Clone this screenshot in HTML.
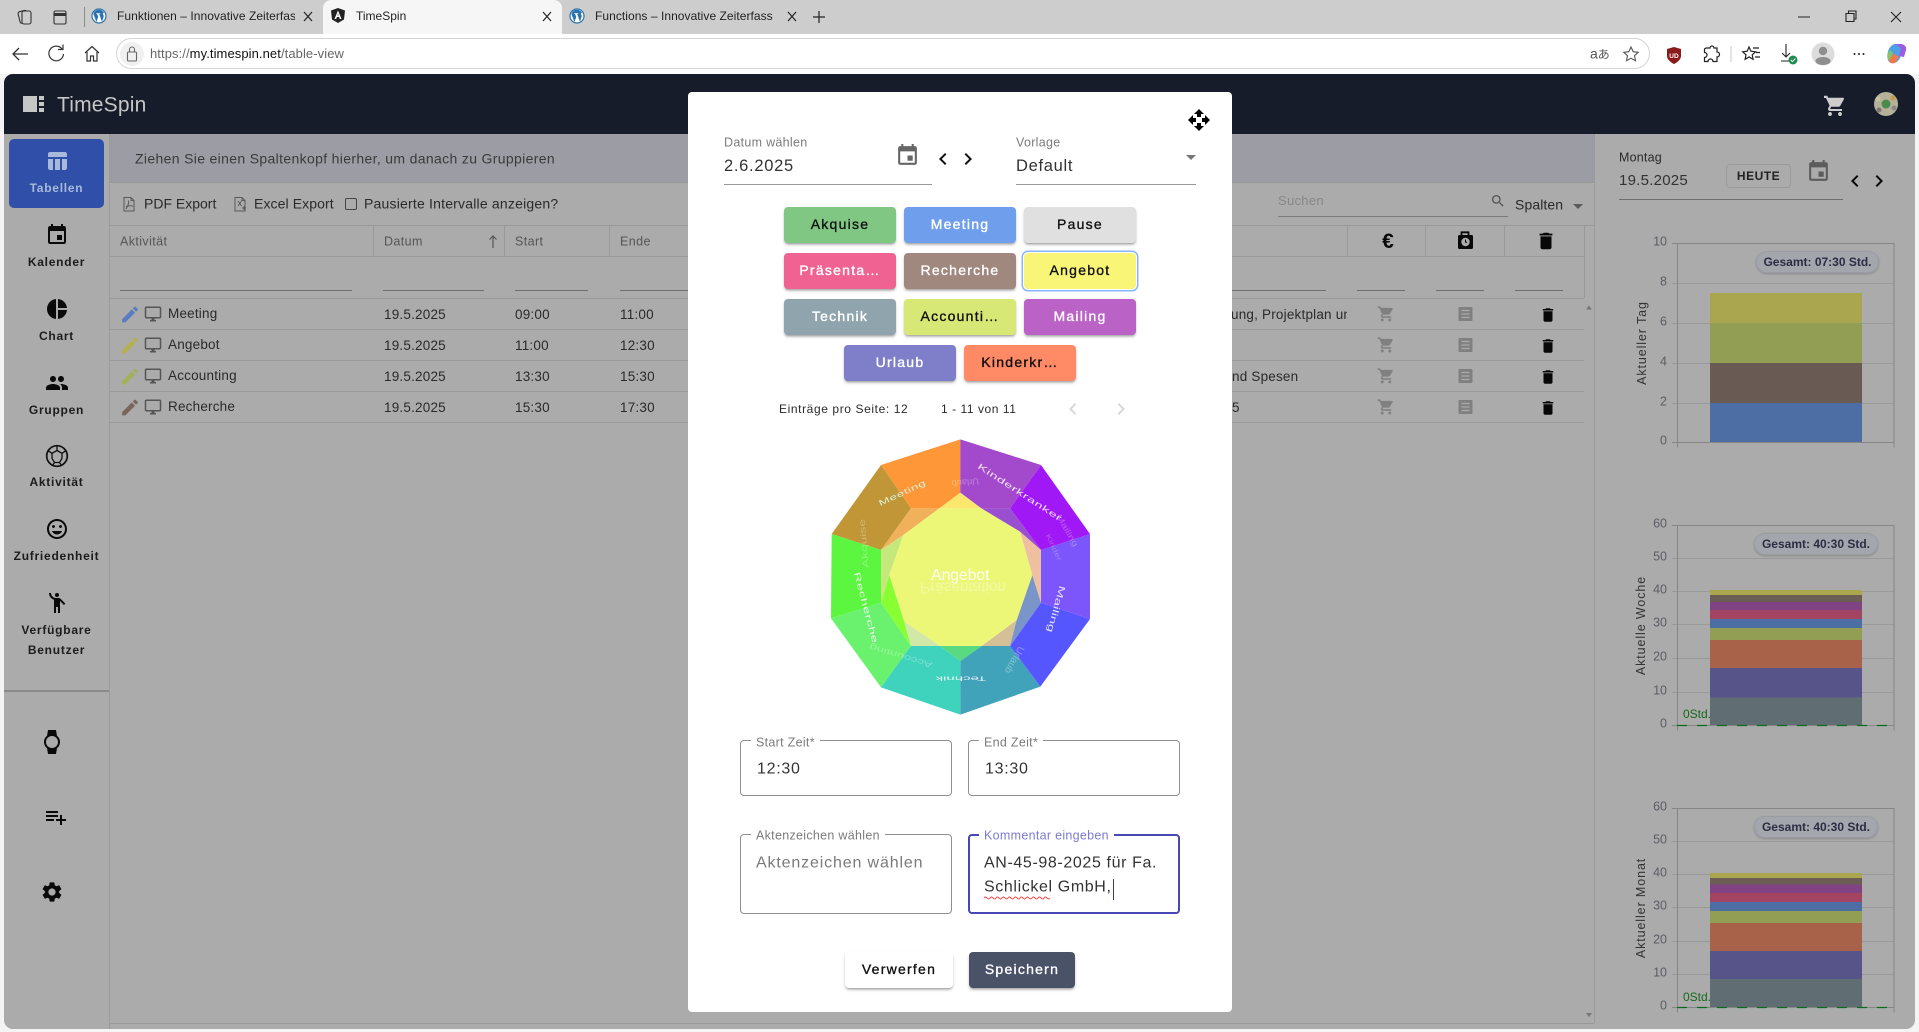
<!DOCTYPE html>
<html lang="de"><head><meta charset="utf-8"><title>TimeSpin</title>
<style>
html,body{margin:0;padding:0;width:1919px;height:1032px;overflow:hidden;background:#f4f4f4;font-family:"Liberation Sans",sans-serif}
.a{position:absolute}
.t{position:absolute;white-space:nowrap;transform:translateY(-50%);line-height:1.2}
svg.full{position:absolute;left:0;top:0;width:1919px;height:1032px;pointer-events:none}
.side{font-size:12px;font-weight:700;letter-spacing:.75px;color:#1c1c1c;width:105px;left:4px;text-align:center}
.row{font-size:13.5px;color:#2a2a2a;letter-spacing:.2px}
.hd{font-size:12.5px;color:#555;letter-spacing:.4px}
.ul{position:absolute;height:1px;background:#6e6e6e}
.hl{position:absolute;height:1px;background:#999}
.vl{position:absolute;width:1px;background:#999}
.num{font-size:12.5px;color:#5c5c66;text-align:right;width:30px;left:1637px}
.pill{position:absolute;background:#a4a6ae;border:1px solid #9a9ca4;border-radius:11px;box-sizing:border-box;box-shadow:0 1px 2px rgba(0,0,0,.2);font-size:12px;font-weight:700;color:#2b2d42;text-align:center;white-space:nowrap}
#modal{position:absolute;left:688px;top:92px;width:544px;height:920px;background:#fff;border-radius:4px}
.btn{position:absolute;width:112px;height:36px;line-height:35px;border-radius:4px;text-align:center;font-size:14px;font-weight:400;-webkit-text-stroke:.35px currentColor;letter-spacing:1.25px;box-shadow:0 2px 2px -1px rgba(0,0,0,.3),0 2px 3px rgba(0,0,0,.16)}
.box{position:absolute;box-sizing:border-box;border:1px solid #8f8f8f;border-radius:4px}
.lab{position:absolute;background:#fff;padding:0 5px;font-size:12.5px;color:#7b7b7b;letter-spacing:.3px;white-space:nowrap;transform:translateY(-50%);line-height:1.2}
.val{font-size:16px;color:#333;letter-spacing:.7px}
</style></head><body>
<svg width="0" height="0" style="position:absolute">
<symbol id="table" viewBox="0 0 24 24"><path d="M10 10.02h5V21h-5zM17 21h3c1.1 0 2-.9 2-2v-9h-5v11zm3-18H5c-1.1 0-2 .9-2 2v3h19V5c0-1.1-.9-2-2-2zM3 19c0 1.1.9 2 2 2h3V10H3v9z"/></symbol>
<symbol id="event" viewBox="0 0 24 24"><path d="M17 12h-5v5h5v-5zM16 1v2H8V1H6v2H5c-1.11 0-1.99.9-1.99 2L3 19c0 1.1.89 2 2 2h14c1.1 0 2-.9 2-2V5c0-1.1-.9-2-2-2h-1V1h-2zm3 18H5V8h14v11z"/></symbol>
<symbol id="pie" viewBox="0 0 24 24"><path d="M11 2v20c-5.07-.5-9-4.79-9-10s3.93-9.5 9-10zm2.03 0v8.99H22c-.47-4.74-4.24-8.52-8.97-8.99zm0 11.01V22c4.74-.47 8.5-4.25 8.97-8.99h-8.97z"/></symbol>
<symbol id="people" viewBox="0 0 24 24"><path d="M16 11c1.66 0 2.99-1.34 2.99-3S17.66 5 16 5c-1.66 0-3 1.34-3 3s1.34 3 3 3zm-8 0c1.66 0 2.99-1.34 2.99-3S9.66 5 8 5C6.34 5 5 6.34 5 8s1.34 3 3 3zm0 2c-2.33 0-7 1.17-7 3.5V19h14v-2.5c0-2.33-4.67-3.5-7-3.5zm8 0c-.29 0-.62.02-.97.05 1.16.84 1.97 1.97 1.97 3.45V19h6v-2.5c0-2.33-4.67-3.5-7-3.5z"/></symbol>
<symbol id="mood" viewBox="0 0 24 24"><path d="M11.99 2C6.47 2 2 6.48 2 12s4.47 10 9.99 10C17.52 22 22 17.52 22 12S17.52 2 11.99 2zM12 20c-4.42 0-8-3.58-8-8s3.58-8 8-8 8 3.58 8 8-3.58 8-8 8zm3.5-9c.83 0 1.5-.67 1.5-1.5S16.33 8 15.5 8 14 8.67 14 9.5s.67 1.5 1.5 1.5zm-7 0c.83 0 1.5-.67 1.5-1.5S9.33 8 8.5 8 7 8.67 7 9.5 7.67 11 8.5 11zm3.5 6.5c2.33 0 4.31-1.46 5.11-3.5H6.89c.8 2.04 2.78 3.5 5.11 3.5z"/></symbol>
<symbol id="wave" viewBox="0 0 24 24"><circle cx="12" cy="4" r="2"/><path d="M15.89 8.11C15.5 7.72 14.83 7 13.53 7c-.21 0-1.42 0-2.54-.01C8.25 6.96 6 4.73 6 2H4c0 3.16 2.11 5.84 5 6.71V22h2v-6h2v6h2V10.05L18.95 14l1.41-1.41-4.47-4.48z"/></symbol>
<symbol id="watch" viewBox="0 0 24 24"><path d="M20 12c0-2.54-1.19-4.81-3.04-6.27L16 0H8l-.95 5.73C5.19 7.19 4 9.45 4 12s1.19 4.81 3.05 6.27L8 24h8l.96-5.73C18.81 16.81 20 14.54 20 12zM6 12c0-3.31 2.69-6 6-6s6 2.69 6 6-2.69 6-6 6-6-2.69-6-6z"/></symbol>
<symbol id="plist" viewBox="0 0 24 24"><path d="M14 10H2v2h12v-2zm0-4H2v2h12V6zm4 8v-4h-2v4h-4v2h4v4h2v-4h4v-2h-4zM2 16h8v-2H2v2z"/></symbol>
<symbol id="gear" viewBox="0 0 24 24"><path d="M19.14 12.94c.04-.3.06-.61.06-.94 0-.32-.02-.64-.07-.94l2.03-1.58a.49.49 0 0 0 .12-.61l-1.92-3.32a.488.488 0 0 0-.59-.22l-2.39.96c-.5-.38-1.03-.7-1.62-.94l-.36-2.54a.484.484 0 0 0-.48-.41h-3.84c-.24 0-.43.17-.47.41l-.36 2.54c-.59.24-1.13.57-1.62.94l-2.39-.96c-.22-.08-.47 0-.59.22L2.74 8.87c-.12.21-.08.47.12.61l2.03 1.58c-.05.3-.09.63-.09.94s.02.64.07.94l-2.03 1.58a.49.49 0 0 0-.12.61l1.92 3.32c.12.22.37.29.59.22l2.39-.96c.5.38 1.03.7 1.62.94l.36 2.54c.05.24.24.41.48.41h3.84c.24 0 .44-.17.47-.41l.36-2.54c.59-.24 1.13-.56 1.62-.94l2.39.96c.22.08.47 0 .59-.22l1.92-3.32c.12-.22.07-.47-.12-.61l-2.01-1.58zM12 15.6c-1.98 0-3.6-1.62-3.6-3.6s1.62-3.6 3.6-3.6 3.6 1.62 3.6 3.6-1.62 3.6-3.6 3.6z"/></symbol>
<symbol id="cart" viewBox="0 0 24 24"><path d="M7 18c-1.1 0-1.99.9-1.99 2S5.9 22 7 22s2-.9 2-2-.9-2-2-2zM1 2v2h2l3.6 7.59-1.35 2.45c-.16.28-.25.61-.25.96 0 1.1.9 2 2 2h12v-2H7.42c-.14 0-.25-.11-.25-.25l.03-.12.9-1.83h7.45c.75 0 1.41-.41 1.75-1.03l3.58-6.49c.08-.14.12-.31.12-.48 0-.55-.45-1-1-1H5.21l-.94-2H1zm16 16c-1.1 0-1.99.9-1.99 2s.89 2 1.99 2 2-.9 2-2-.9-2-2-2z"/></symbol>
<symbol id="del" viewBox="0 0 24 24"><path d="M6 19c0 1.1.9 2 2 2h8c1.1 0 2-.9 2-2V7H6v12zM19 4h-3.5l-1-1h-5l-1 1H5v2h14V4z"/></symbol>
<symbol id="edit" viewBox="0 0 24 24"><path d="M3 17.25V21h3.75L17.81 9.94l-3.75-3.75L3 17.25zM20.71 7.04a.996.996 0 0 0 0-1.41l-2.34-2.34a.996.996 0 0 0-1.41 0l-1.83 1.83 3.75 3.75 1.83-1.83z"/></symbol>
<symbol id="desk" viewBox="0 0 24 24"><path d="M21 2H3c-1.1 0-2 .9-2 2v12c0 1.1.9 2 2 2h7v2H8v2h8v-2h-2v-2h7c1.1 0 2-.9 2-2V4c0-1.1-.9-2-2-2zm0 14H3V4h18v12z"/></symbol>
<symbol id="search" viewBox="0 0 24 24"><path d="M15.5 14h-.79l-.28-.27C15.41 12.59 16 11.11 16 9.5 16 5.91 13.09 3 9.5 3S3 5.91 3 9.5 5.91 16 9.5 16c1.61 0 3.09-.59 4.23-1.57l.27.28v.79l5 4.99L20.49 19l-4.99-5zm-6 0C7.01 14 5 11.99 5 9.5S7.01 5 9.5 5 14 7.01 14 9.5 11.99 14 9.5 14z"/></symbol>
<symbol id="move" viewBox="0 0 24 24"><path d="M10 9h4V6h3l-5-5-5 5h3v3zm-1 1H6V7l-5 5 5 5v-3h3v-4zm14 2l-5-5v3h-3v4h3v3l5-5zm-9 3h-4v3H7l5 5 5-5h-3v-3z"/></symbol>
<symbol id="cl" viewBox="0 0 24 24"><path d="M15.41 7.41L14 6l-6 6 6 6 1.41-1.41L10.83 12z"/></symbol>
<symbol id="cr" viewBox="0 0 24 24"><path d="M10 6L8.59 7.41 13.17 12l-4.58 4.59L10 18l6-6z"/></symbol>
<symbol id="notes" viewBox="0 0 14 14"><rect width="14" height="14" rx="1"/><path d="M3 3.5h8M3 7h8M3 10.5h8" stroke="#ababab" stroke-width="1.3"/></symbol>
<symbol id="wp" viewBox="0 0 16 16"><circle cx="8" cy="8" r="7.6" fill="#2a73ad"/><circle cx="8" cy="8" r="6.4" fill="#fff"/><path d="M2.4 6l3 8 1.8-5-1-3h-1V5.2h4V6h-1l2.8 7.8 1.6-5c.4-1.4-.4-2-.8-3 0-.8 1-1 1.5-.6C11.600 2.400 9.400 1.800 8 1.800 5.800 1.800 4 2.800 3 4.400z" fill="#2a73ad"/></symbol>
</svg>

<!-- browser chrome -->
<div class="a" style="left:0;top:0;width:1919px;height:34px;background:#cdcdcd"></div>
<div class="a" style="left:0;top:34px;width:1919px;height:40px;background:#fff"></div>
<div class="a" style="left:323px;top:0;width:239px;height:34px;background:#f6f6f6;border-radius:8px 8px 0 0"></div>
<div class="a" style="left:84px;top:7px;width:1px;height:20px;background:#8b8b8b"></div>
<div class="a" style="left:116px;top:38px;width:1534px;height:31px;box-sizing:border-box;background:#fff;border:1px solid #d4d4d4;border-radius:16px"></div>
<div class="a" style="left:120px;top:42px;width:24px;height:24px;border-radius:12px;background:#f0f0f0"></div>
<div class="t" style="left:117px;top:16px;width:178px;overflow:hidden;font-size:12px;color:#222;letter-spacing:.05px">Funktionen – Innovative Zeiterfassung</div>
<div class="t" style="left:356px;top:16px;font-size:12px;color:#222">TimeSpin</div>
<div class="t" style="left:595px;top:16px;width:178px;overflow:hidden;font-size:12px;color:#222;letter-spacing:.05px">Functions – Innovative Zeiterfassung</div>
<div class="t" style="left:150px;top:54px;font-size:13px;color:#666;letter-spacing:.08px">https://<span style="color:#111">my.timespin.net</span>/table-view</div>
<div class="t" style="left:1590px;top:54px;font-size:14px;color:#555">a<span style="font-family:'Noto Sans CJK JP',sans-serif;font-size:12px">あ</span></div>

<!-- app -->
<div class="a" style="left:4px;top:74px;width:1911px;height:955px;background:#ababab;border-radius:9px;overflow:hidden">
 <div class="a" style="left:0;top:0;width:1911px;height:60px;background:#161c2a"></div>
</div>
<div class="a" style="left:9px;top:139px;width:95px;height:69px;background:#2f4fa8;border-radius:5px"></div>
<div class="vl" style="left:109px;top:134px;height:895px;background:#9a9a9a"></div>
<div class="a" style="left:110px;top:134px;width:1484px;height:48px;background:#9c9ca5"></div>
<div class="hl" style="left:110px;top:182px;width:1484px;background:#989898"></div>
<div class="hl" style="left:110px;top:225px;width:1484px"></div>
<div class="hl" style="left:110px;top:256px;width:1474px"></div>
<div class="hl" style="left:110px;top:298px;width:1474px"></div>
<div class="hl" style="left:110px;top:329px;width:1474px"></div>
<div class="hl" style="left:110px;top:360px;width:1474px"></div>
<div class="hl" style="left:110px;top:391px;width:1474px"></div>
<div class="hl" style="left:110px;top:422px;width:1474px"></div>
<div class="hl" style="left:110px;top:1023px;width:1484px"></div>
<div class="vl" style="left:1594px;top:134px;height:889px;background:#9a9a9a"></div>
<div class="vl" style="left:373px;top:226px;height:30px"></div>
<div class="vl" style="left:504px;top:226px;height:30px"></div>
<div class="vl" style="left:609px;top:226px;height:30px"></div>
<div class="vl" style="left:1347px;top:226px;height:30px"></div>
<div class="vl" style="left:1425px;top:226px;height:30px"></div>
<div class="vl" style="left:1504px;top:226px;height:30px"></div>
<div class="vl" style="left:1584px;top:226px;height:72px"></div>
<div class="ul" style="left:120px;top:290px;width:232px"></div>
<div class="ul" style="left:383px;top:290px;width:101px"></div>
<div class="ul" style="left:515px;top:290px;width:73px"></div>
<div class="ul" style="left:620px;top:290px;width:68px"></div>
<div class="ul" style="left:1232px;top:290px;width:94px"></div>
<div class="ul" style="left:1357px;top:290px;width:48px"></div>
<div class="ul" style="left:1436px;top:290px;width:48px"></div>
<div class="ul" style="left:1515px;top:290px;width:48px"></div>
<div class="a" style="left:4px;top:690px;width:105px;height:2px;background:#8a8a8a"></div>

<div class="t" style="left:57px;top:105px;font-size:21px;color:#c6c6c6;letter-spacing:.2px">TimeSpin</div>
<div class="a" style="left:23px;top:96px;width:14px;height:16px;background:#c6c6c6"></div>
<div class="a" style="left:39px;top:96px;width:5px;height:4px;background:#c6c6c6"></div>
<div class="a" style="left:39px;top:102px;width:5px;height:4px;background:#c6c6c6"></div>
<div class="a" style="left:39px;top:108px;width:5px;height:4px;background:#c6c6c6"></div>

<div class="t side" style="top:188px;color:#a9b9dc">Tabellen</div>
<div class="t side" style="top:262px">Kalender</div>
<div class="t side" style="top:336px">Chart</div>
<div class="t side" style="top:410px">Gruppen</div>
<div class="t side" style="top:482px">Aktivität</div>
<div class="t side" style="top:556px">Zufriedenheit</div>
<div class="t side" style="top:630px">Verfügbare</div>
<div class="t side" style="top:650px">Benutzer</div>

<div class="t" style="left:135px;top:159px;font-size:14px;color:#3a3a3a;letter-spacing:.34px">Ziehen Sie einen Spaltenkopf hierher, um danach zu Gruppieren</div>
<div class="t" style="left:144px;top:204px;font-size:14px;color:#2a2a2a">PDF Export</div>
<div class="t" style="left:254px;top:204px;font-size:14px;color:#2a2a2a;letter-spacing:.1px">Excel Export</div>
<div class="a" style="left:345px;top:198px;width:12px;height:12px;box-sizing:border-box;border:1px solid #444;border-radius:2px"></div>
<div class="t" style="left:364px;top:204px;font-size:14px;color:#2a2a2a;letter-spacing:.2px">Pausierte Intervalle anzeigen?</div>

<div class="t hd" style="left:120px;top:241.5px">Aktivität</div>
<div class="t hd" style="left:384px;top:241.5px">Datum</div>
<div class="t hd" style="left:515px;top:241.5px">Start</div>
<div class="t hd" style="left:620px;top:241.5px">Ende</div>

<div class="t row" style="left:168px;top:314px">Meeting</div><div class="t row" style="left:384px;top:315px">19.5.2025</div><div class="t row" style="left:515px;top:315px">09:00</div><div class="t row" style="left:620px;top:315px">11:00</div>
<div class="t row" style="left:168px;top:345px">Angebot</div><div class="t row" style="left:384px;top:346px">19.5.2025</div><div class="t row" style="left:515px;top:346px">11:00</div><div class="t row" style="left:620px;top:346px">12:30</div>
<div class="t row" style="left:168px;top:376px">Accounting</div><div class="t row" style="left:384px;top:377px">19.5.2025</div><div class="t row" style="left:515px;top:377px">13:30</div><div class="t row" style="left:620px;top:377px">15:30</div>
<div class="t row" style="left:168px;top:407px">Recherche</div><div class="t row" style="left:384px;top:408px">19.5.2025</div><div class="t row" style="left:515px;top:408px">15:30</div><div class="t row" style="left:620px;top:408px">17:30</div>
<div class="t row" style="left:1232px;top:315px;width:115px;overflow:hidden"><span style="margin-left:-1px">ung, Projektplan und</span></div>
<div class="t row" style="left:1232px;top:377px">nd Spesen</div>
<div class="t row" style="left:1232px;top:408px">5</div>

<div class="t" style="left:1278px;top:201px;font-size:13px;color:#888;letter-spacing:.3px">Suchen</div>
<div class="ul" style="left:1278px;top:216px;width:230px;background:#7a7a7a"></div>
<div class="t" style="left:1515px;top:205px;font-size:14px;color:#2a2a2a;letter-spacing:.1px">Spalten</div>

<div class="t" style="left:1619px;top:158px;font-size:12.5px;color:#2a2a2a;letter-spacing:.2px">Montag</div>
<div class="t" style="left:1619px;top:181px;font-size:15px;color:#333;letter-spacing:.25px">19.5.2025</div>
<div class="ul" style="left:1619px;top:199px;width:224px"></div>
<div class="a" style="left:1726px;top:164px;width:65px;height:24px;box-sizing:border-box;border:1px solid #9a9a9a;border-radius:4px;text-align:center;line-height:22px;font-size:12px;font-weight:700;color:#222;letter-spacing:.5px">HEUTE</div>

<!-- page svg: icons + charts -->
<svg class="full" viewBox="0 0 1919 1032">
 <!-- chrome icons -->
 <g fill="none" stroke="#333" stroke-width="1.1">
  <rect x="19" y="11" width="9" height="12" rx="2" transform="rotate(-14 23 17)"/><rect x="22" y="11" width="9" height="13" rx="2" fill="#cdcdcd"/>
  <rect x="54" y="11" width="12" height="13" rx="1.5"/><path d="M54 14.500h12" stroke-width="3"/>
  <path d="M304 12l8 9M312 12l-8 9M543 12l8 9M551 12l-8 9M788 12l8 9M796 12l-8 9M813 17h12M819 11v12" stroke="#222" stroke-width="1.2"/>
  <path d="M1798 17h12M1846 13.500h8v8h-8zM1848.500 13.500v-2.500h7.500v8h-2M1891 12l10 10M1901 12l-10 10" stroke="#222"/>
  <path d="M28 54H13M19 48l-6 6 6 6" stroke-width="1.3"/>
  <path d="M62 49a7.300 7.300 0 1 0 1.500 5M63 44.500v5h-5" stroke-width="1.2"/>
  <path d="M85 53l7-6.500 7 6.500M87 52v9h3.500v-5h3v5h3.500v-9" stroke-width="1.2"/>
  <rect x="127.500" y="52" width="9" height="9" rx="1" stroke="#666"/><path d="M129.500 52v-2.500a2.500 2.500 0 0 1 5 0V52" stroke="#666"/>
  <path d="M1631 47l2.200 4.700 5 .6-3.700 3.400 1 5-4.500-2.500-4.500 2.500 1-5-3.700-3.400 5-.6z" stroke="#555"/>
  <path transform="translate(-2 0)" d="M1708 48h4a2 2 0 0 1 4 0h3v4a2.500 2.500 0 0 1 0 5v4.500h-4a2.500 2.500 0 0 0-5 0h-3.500V57.500a2.500 2.500 0 0 0 0-5V49z" stroke="#222" stroke-width="1.200"/>
  <path d="M1731 46v16" stroke="#ccc"/>
  <path d="M1749 47l2 4.200 4.500.6-3.300 3 .9 4.500-4-2.300-4 2.300.9-4.500-3.300-3 4.500-.6zM1753 48h6M1756 52.500h4M1755 57h5" stroke="#222" stroke-width="1.200"/>
  <path d="M1786 44v13M1782 53l4 4 4-4M1781 61h10" stroke="#222"/>
 </g>
 <use href="#wp" x="91" y="8" width="16" height="16"/>
 <use href="#wp" x="569" y="8" width="16" height="16"/>
 <path d="M338 8l7 2.500-1 9-6 3.500-6-3.500-1-9z" fill="#222"/><path d="M338 10.500l-3.500 8.500h1.700l.7-2h2.200l.7 2h1.700zM337.500 15.500l.5-2 .5 2z" fill="#fff"/>
 <path d="M1674 47l7 2v7c0 3-3 6-7 8-4-2-7-5-7-8v-7z" fill="#8b1a1a"/>
 <text x="1674" y="58" font-size="6.500" font-weight="700" fill="#fff" text-anchor="middle" font-family="Liberation Sans">UD</text>
 <circle cx="1793" cy="60" r="4.500" fill="#1e8e4e"/><path d="M1790.800 60l1.600 1.600 3-3" fill="none" stroke="#fff"/>
 <circle cx="1823" cy="54" r="11.500" fill="#dcdcdc"/><circle cx="1823" cy="51" r="4.200" fill="#8e8e8e"/><ellipse cx="1823" cy="61" rx="7.500" ry="4" fill="#8e8e8e"/>
 <circle cx="1854.500" cy="54" r="1" fill="#222"/><circle cx="1859" cy="54" r="1" fill="#222"/><circle cx="1863.500" cy="54" r="1" fill="#222"/>
 <path d="M1888 60c-2-6 1-15 7-16h6c2 0 3 2 3 3l-3 9c-2 5-6 8-9 7-2 0-3-1-4-3z" fill="#4f9fe8"/><path d="M1895 44h6c3 0 6 3 5 6l-2 7-5-1 2-8z" fill="#9a5de0"/><path d="M1889 58c2-6 6-4 8-2l2 0-3 6c-2 2-5 2-7-1z" fill="#f0794a"/><path d="M1888 60c-1-4 0-8 2-10l3 3-3 6z" fill="#7fc76a"/>

 <!-- sidebar icons -->
 <use href="#table" x="45" y="149" width="24" height="24" fill="#a9b9dc"/>
 <use href="#event" x="45" y="223" width="24" height="24" fill="#0a0a0a"/>
 <use href="#pie" x="45" y="297" width="24" height="24" fill="#0a0a0a"/>
 <use href="#people" x="45" y="371" width="24" height="24" fill="#0a0a0a"/>
 <g fill="none" stroke="#111"><circle cx="57" cy="456" r="10.300" stroke-width="1.700"/><path d="M57 450.500l5 2.800v5l-2.500 4.200h-5l-2.500-4.200v-5zM57 450.500v-5M62 453.300l4.500-3M59.500 462.500l2 3M54.500 462.500l-2 3M52 453.300l-4.500-3" stroke-width="1.300"/></g>
 <use href="#mood" x="45" y="517" width="24" height="24" fill="#0a0a0a"/>
 <use href="#wave" x="45" y="591" width="24" height="24" fill="#0a0a0a"/>
 <use href="#watch" x="40" y="730" width="24" height="24" fill="#0a0a0a"/>
 <use href="#plist" x="44" y="805" width="24" height="24" fill="#0a0a0a"/>
 <use href="#gear" x="40" y="880" width="24" height="24" fill="#0a0a0a"/>
 <!-- header icons -->
 <use href="#cart" x="1823" y="94" width="24" height="24" fill="#cdcdcd"/>
 <circle cx="1886" cy="104" r="12" fill="#b6b29a"/><circle cx="1886" cy="104" r="4.500" fill="#4c8a4c"/><circle cx="1879" cy="110" r="2.500" fill="#777"/><circle cx="1893" cy="98" r="2.500" fill="#c09b4a"/><circle cx="1894" cy="108" r="2.500" fill="#888"/><circle cx="1878" cy="99" r="2.500" fill="#c9c2a0"/>
 <!-- toolbar icons -->
 <g fill="none" stroke="#5a5a5a" stroke-width="1"><path d="M124 197.500h7l3 3V211h-10zM131 197.500v3h3M126 209c2-3 3-6 2.500-8.500M126 206.500c3-1 6-1 7 0"/><path d="M235 197.500h7l3 3V211h-10zM242 197.500v3h3M238 201l3.500 5M241.500 201l-3.500 5M242 208h4M244 206v4"/></g>
 <path d="M493 248v-12M489.500 239.500l3.500-3.500 3.500 3.500" fill="none" stroke="#555" stroke-width="1.200"/>
 <use href="#search" x="1490" y="193" width="16" height="16" fill="#555"/>
 <path d="M1573 204h10l-5 5z" fill="#5a5a5a"/>
 <!-- table header icons -->
 <text x="1388" y="248" font-size="21" font-weight="700" text-anchor="middle" fill="#080808" font-family="Liberation Sans">€</text>
 <path d="M1461.500 235.500v-3.200h7v3.200" fill="none" stroke="#080808" stroke-width="1.800"/><rect x="1458" y="235" width="15" height="14" rx="1.500" fill="#080808"/><circle cx="1465.500" cy="242" r="4.200" fill="#ababab"/><path d="M1465.500 239.500v2.800h1.600" stroke="#080808" fill="none"/>
 <use href="#del" x="1535" y="230" width="22" height="22" fill="#080808"/>
 <!-- rows -->
 <use href="#edit" x="119.500" y="304" width="21" height="21" fill="#5b7dc0"/><use href="#edit" x="119.500" y="335" width="21" height="21" fill="#b5b050"/><use href="#edit" x="119.500" y="366" width="21" height="21" fill="#a3b05a"/><use href="#edit" x="119.500" y="397" width="21" height="21" fill="#7a665c"/>
 <g fill="#555"><use href="#desk" x="144" y="305" width="18" height="18"/><use href="#desk" x="144" y="336" width="18" height="18"/><use href="#desk" x="144" y="367" width="18" height="18"/><use href="#desk" x="144" y="398" width="18" height="18"/></g>
 <g fill="#808080"><use href="#cart" x="1377" y="305" width="18" height="18"/><use href="#cart" x="1377" y="336" width="18" height="18"/><use href="#cart" x="1377" y="367" width="18" height="18"/><use href="#cart" x="1377" y="398" width="18" height="18"/>
 <use href="#notes" x="1458.500" y="307" width="14" height="14"/><use href="#notes" x="1458.500" y="338" width="14" height="14"/><use href="#notes" x="1458.500" y="369" width="14" height="14"/><use href="#notes" x="1458.500" y="400" width="14" height="14"/></g>
 <g fill="#080808"><use href="#del" x="1539" y="306" width="18" height="18"/><use href="#del" x="1539" y="337" width="18" height="18"/><use href="#del" x="1539" y="368" width="18" height="18"/><use href="#del" x="1539" y="399" width="18" height="18"/></g>
 <path d="M1586 309.500l3-4 3 4zM1586 1013l3 4 3-4z" fill="#777"/>
 <!-- right header icons -->
 <use href="#event" x="1806" y="159" width="25" height="25" fill="#5c5c5c"/>
 <use href="#cl" x="1843" y="169" width="24" height="24" fill="#0a0a0a"/><use href="#cr" x="1867" y="169" width="24" height="24" fill="#0a0a0a"/>

 <!-- chart 1 -->
 <path d="M1672 283.500h222M1672 323.500h222M1672 363.500h222M1672 403.500h222" fill="none" stroke="#999"/>
 <rect x="1710" y="403" width="152" height="39" fill="#4d6ea5"/><rect x="1710" y="363" width="152" height="40" fill="#695b54"/><rect x="1710" y="323" width="152" height="40" fill="#929e53"/><rect x="1710" y="293" width="152" height="30" fill="#aaa650"/>
 <path d="M1672 243.500h222v204M1677.500 243.500v204M1672 442.500h222" fill="none" stroke="#868686"/>
 <!-- chart 2 -->
 <path d="M1672 558.500h222M1672 591.500h222M1672 624.500h222M1672 658.500h222M1672 692.500h222" fill="none" stroke="#999"/>
 <rect x="1710" y="697.500" width="152" height="27.500" fill="#606e74"/><rect x="1710" y="668" width="152" height="29.500" fill="#565489"/><rect x="1710" y="640" width="152" height="28" fill="#a8624a"/><rect x="1710" y="628" width="152" height="12" fill="#929e53"/><rect x="1710" y="619" width="152" height="9" fill="#4d6ea5"/><rect x="1710" y="610" width="152" height="9" fill="#a34462"/><rect x="1710" y="602" width="152" height="8" fill="#804484"/><rect x="1710" y="595" width="152" height="7" fill="#6b5d54"/><rect x="1710" y="590" width="152" height="5" fill="#aaa650"/>
 <path d="M1672 525.500h222v205M1677.500 525.500v205M1672 725.500h222" fill="none" stroke="#868686"/>
 <path d="M1677 725.500h217" stroke="#0a6b1a" stroke-width="1.300" stroke-dasharray="10 10" fill="none"/>
 <!-- chart 3 -->
 <path d="M1672 841.500h222M1672 874.500h222M1672 907.500h222M1672 941.500h222M1672 974.500h222" fill="none" stroke="#999"/>
 <rect x="1710" y="979" width="152" height="28" fill="#606e74"/><rect x="1710" y="951" width="152" height="28" fill="#565489"/><rect x="1710" y="923" width="152" height="28" fill="#a8624a"/><rect x="1710" y="911" width="152" height="12" fill="#929e53"/><rect x="1710" y="902" width="152" height="9" fill="#4d6ea5"/><rect x="1710" y="893" width="152" height="9" fill="#a34462"/><rect x="1710" y="884.500" width="152" height="8.500" fill="#804484"/><rect x="1710" y="878" width="152" height="6.500" fill="#6b5d54"/><rect x="1710" y="873" width="152" height="5" fill="#aaa650"/>
 <path d="M1672 808.500h222v204M1677.500 808.500v204M1672 1007.500h222" fill="none" stroke="#868686"/>
 <path d="M1677 1007.500h217" stroke="#0a6b1a" stroke-width="1.300" stroke-dasharray="10 10" fill="none"/>
 <g font-family="Liberation Sans" font-size="12.500" fill="#333" text-anchor="middle" letter-spacing=".9">
  <text transform="translate(1646 343) rotate(-90)">Aktueller Tag</text>
  <text transform="translate(1645 625.500) rotate(-90)">Aktuelle Woche</text>
  <text transform="translate(1645 908) rotate(-90)">Aktueller Monat</text>
 </g>
</svg>

<div class="t num" style="top:242px">10</div><div class="t num" style="top:282px">8</div><div class="t num" style="top:322px">6</div><div class="t num" style="top:362px">4</div><div class="t num" style="top:402px">2</div><div class="t num" style="top:441px">0</div>
<div class="t num" style="top:524px">60</div><div class="t num" style="top:557px">50</div><div class="t num" style="top:590px">40</div><div class="t num" style="top:623px">30</div><div class="t num" style="top:657px">20</div><div class="t num" style="top:691px">10</div><div class="t num" style="top:724px">0</div>
<div class="t num" style="top:807px">60</div><div class="t num" style="top:840px">50</div><div class="t num" style="top:873px">40</div><div class="t num" style="top:906px">30</div><div class="t num" style="top:940px">20</div><div class="t num" style="top:973px">10</div><div class="t num" style="top:1006px">0</div>
<div class="pill" style="left:1756px;top:251px;width:123px;height:22px;line-height:20px">Gesamt: 07:30 Std.</div>
<div class="pill" style="left:1754px;top:533px;width:124px;height:22px;line-height:20px">Gesamt: 40:30 Std.</div>
<div class="pill" style="left:1754px;top:816px;width:124px;height:22px;line-height:20px">Gesamt: 40:30 Std.</div>
<div class="t" style="left:1683px;top:714px;font-size:12px;color:#16691c">0Std.</div>
<div class="t" style="left:1683px;top:997px;font-size:12px;color:#16691c">0Std.</div>

<!-- modal -->
<div id="modal">
 <div class="t" style="left:36px;top:51px;font-size:12.500px;color:#7b7b7b;letter-spacing:.3px">Datum wählen</div>
 <div class="t val" style="left:36px;top:75px;font-size:16.500px">2.6.2025</div>
 <div class="ul" style="left:36px;top:92px;width:208px;background:#999"></div>
 <div class="t" style="left:328px;top:51px;font-size:12.500px;color:#7b7b7b;letter-spacing:.3px">Vorlage</div>
 <div class="t val" style="left:328px;top:75px;font-size:16.500px">Default</div>
 <div class="ul" style="left:328px;top:92px;width:180px;background:#999"></div>

 <div class="btn" style="left:96px;top:115px;background:#81c784;color:#111">Akquise</div>
 <div class="btn" style="left:216px;top:115px;background:#6f9fec;color:#fff">Meeting</div>
 <div class="btn" style="left:336px;top:115px;background:#e0e0e0;color:#111">Pause</div>
 <div class="btn" style="left:96px;top:161px;background:#f06292;color:#fff">Präsenta…</div>
 <div class="btn" style="left:216px;top:161px;background:#a1887f;color:#fff">Recherche</div>
 <div class="btn" style="left:336px;top:161px;background:#f9f577;color:#111;box-shadow:0 0 0 1px #fff,0 0 0 2.500px #8ab4f8">Angebot</div>
 <div class="btn" style="left:96px;top:207px;background:#90a4ae;color:#fff">Technik</div>
 <div class="btn" style="left:216px;top:207px;background:#d7e876;color:#111">Accounti…</div>
 <div class="btn" style="left:336px;top:207px;background:#ba62c6;color:#fff">Mailing</div>
 <div class="btn" style="left:156px;top:253px;background:#7e7fc8;color:#fff">Urlaub</div>
 <div class="btn" style="left:276px;top:253px;background:#ff8a65;color:#111">Kinderkr…</div>

 <div class="t" style="left:91px;top:317px;font-size:12px;color:#2a2a2a;letter-spacing:.6px">Einträge pro Seite: 12</div>
 <div class="t" style="left:253px;top:317px;font-size:12px;color:#2a2a2a;letter-spacing:.55px">1 - 11 von 11</div>

 <svg style="position:absolute;left:112px;top:328px;width:320px;height:320px" viewBox="0 0 960 960">
  <polygon points="481,58 481,218 418,265 333,265 243,135" fill="#fd9738"/>
  <polygon points="243,135 333,265 243,390 95,342" fill="#c09636"/>
  <polygon points="95,342 243,390 243,548 93,595" fill="#5cf640"/>
  <polygon points="93,595 243,548 333,678 243,802" fill="#6af26e"/>
  <polygon points="243,802 333,678 420,678 481,723 481,884" fill="#3fd3bd"/>
  <polygon points="481,884 481,723 545,678 630,678 721,800" fill="#41a3ba"/>
  <polygon points="721,800 630,678 723,548 870,597" fill="#5656ff"/>
  <polygon points="870,597 723,548 723,390 870,342" fill="#7c55fb"/>
  <polygon points="870,342 723,390 630,265 723,135" fill="#a018f5"/>
  <polygon points="723,135 630,265 544,265 481,218 481,58" fill="#a349cc"/>
  <!-- inner facets -->
  <polygon points="333,265 418,265 310,345 243,390" fill="#f1b05a"/>
  <polygon points="243,390 310,345 268,465 243,548" fill="#c5e87a"/>
  <polygon points="268,465 313,605 333,678 243,548" fill="#88ff33"/>
  <polygon points="313,605 420,678 333,678" fill="#d2e8a8"/>
  <polygon points="420,678 545,678 481,723" fill="#59d980"/>
  <polygon points="545,678 650,600 630,678" fill="#d4bf96"/>
  <polygon points="650,600 697,465 723,548 630,678" fill="#7a96c8"/>
  <polygon points="697,465 660,335 723,390 723,548" fill="#efc0a0"/>
  <polygon points="544,265 630,265 723,390 660,335" fill="#9a4fd0"/>
  <polygon points="481,218 544,265 418,265" fill="#fbe66e"/>
  <polygon points="418,265 544,265 660,335 697,465 650,600 545,678 420,678 313,605 268,465 310,345" fill="#ecf677"/>
  <g font-family="Liberation Sans" text-anchor="middle" fill="#fff">
   <text font-size="36" letter-spacing="1" transform="translate(655 224) rotate(33) scale(1.25 .7)" fill-opacity=".85">Kinderkranker</text>
   <text font-size="34" letter-spacing="1" transform="translate(310 226) rotate(-25) scale(1.200 .7)" fill="#dcefd8">Meeting</text>
   <text font-size="38" transform="translate(760 565) rotate(105) scale(1.200 .7)" fill-opacity=".8">Mailing</text>
   <text font-size="36" letter-spacing="1" transform="translate(190 565) rotate(75) scale(1.200 .7)" fill-opacity=".85">Recherche</text>
   <text font-size="36" transform="translate(483 770) rotate(180) scale(1.250 .5)" fill-opacity=".85">Technik</text>
   <text font-size="36" transform="translate(305 700) rotate(197) scale(1.100 .7)" fill-opacity=".3">Accounting</text>
   <text font-size="36" transform="translate(200 370) rotate(-95) scale(1.150 .7)" fill-opacity=".3">Akquise</text>
   <text font-size="34" transform="translate(795 335) rotate(60) scale(1 .7)" fill-opacity=".3">Mailing</text>
   <text font-size="30" transform="translate(755 385) rotate(65) scale(1 .7)" fill-opacity=".25">Kinder</text>
   <text font-size="28" transform="translate(495 178) rotate(175)" fill-opacity=".3">Urlaub</text>
   <text font-size="30" transform="translate(635 715) rotate(120)" fill-opacity=".35">Urlaub</text>
   <text font-size="46" transform="translate(489 480) scale(1 -1)" fill-opacity=".35" y="-8">Präsentation</text>
   <text font-size="47" x="481" y="480" fill-opacity=".9">Angebot</text>
  </g>
 </svg>

 <div class="box" style="left:52px;top:648px;width:212px;height:56px"></div>
 <div class="box" style="left:280px;top:648px;width:212px;height:56px"></div>
 <div class="lab" style="left:63px;top:651px">Start Zeit*</div>
 <div class="lab" style="left:291px;top:651px">End Zeit*</div>
 <div class="t val" style="left:69px;top:677px">12:30</div>
 <div class="t val" style="left:297px;top:677px">13:30</div>

 <div class="box" style="left:52px;top:742px;width:212px;height:80px"></div>
 <div class="box" style="left:280px;top:742px;width:212px;height:80px;border:2px solid #4747b5"></div>
 <div class="lab" style="left:63px;top:743.500px">Aktenzeichen wählen</div>
 <div class="lab" style="left:291px;top:743.500px;color:#7b7bd0">Kommentar eingeben</div>
 <div class="t val" style="left:68px;top:771px;color:#7a7a7a;letter-spacing:.85px">Aktenzeichen wählen</div>
 <div class="t val" style="left:296px;top:771px;letter-spacing:.62px">AN-45-98-2025 für Fa.</div>
 <div class="t val" style="left:296px;top:795px;letter-spacing:.62px">Schlickel GmbH,</div>
 <div class="a" style="left:425px;top:787px;width:1px;height:21px;background:#3333a0"></div>

 <div class="btn" style="left:157px;top:860px;width:108px;background:#fff;color:#111">Verwerfen</div>
 <div class="btn" style="left:281px;top:860px;width:106px;background:#4a5268;color:#fff">Speichern</div>

 <svg style="position:absolute;left:0;top:0;width:544px;height:920px;pointer-events:none" viewBox="0 0 544 920">
  <use href="#move" x="499" y="16" width="24" height="24" fill="#000"/>
  <use href="#event" x="207" y="51" width="25" height="25" fill="#666"/>
  <use href="#cl" x="243" y="55" width="24" height="24" fill="#111"/>
  <use href="#cr" x="268" y="55" width="24" height="24" fill="#111"/>
  <path d="M498 63h10l-5 5z" fill="#777"/>
  <use href="#cl" x="373" y="305" width="24" height="24" fill="#d8d8d8"/>
  <use href="#cr" x="421" y="305" width="24" height="24" fill="#d8d8d8"/>
  <path d="M296 806q1.500-2 3 0t3 0 3 0 3 0 3 0 3 0 3 0 3 0 3 0 3 0 3 0 3 0 3 0 3 0 3 0 3 0 3 0 3 0 3 0 3 0 3 0 3 0" fill="none" stroke="#e44" stroke-width="1"/>
 </svg>
</div>
</body></html>
